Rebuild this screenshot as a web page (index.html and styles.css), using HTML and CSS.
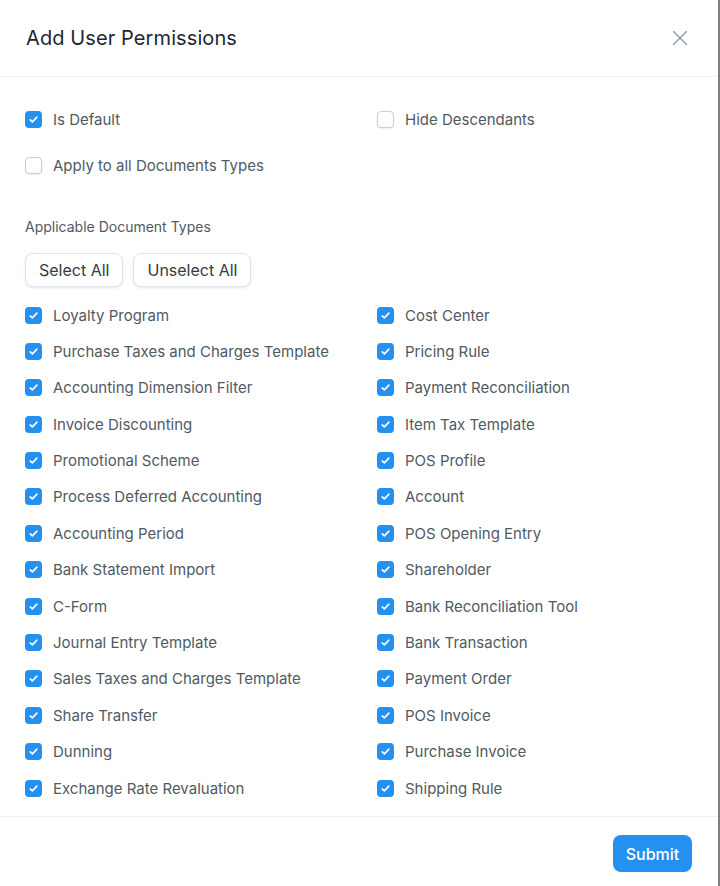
FILE: index.html
```html
<!DOCTYPE html>
<html lang="en">
<head>
    <meta charset="UTF-8">
    <meta name="viewport" content="width=device-width, initial-scale=1.0">
    <title>Add User Permissions</title>
    <link rel="stylesheet" href="styles.css">
</head>
<body>
    <!-- Add User Permissions dialog -->
    <div class="modal">
        <div class="modal-header">
            <h3 class="modal-title">Add User Permissions</h3>
            <button type="button" class="close-btn" aria-label="Close">
                <svg width="16" height="16" viewBox="0 0 16 16" fill="none" stroke="#8d99a6" stroke-width="1.4" stroke-linecap="round">
                    <path d="M1.5 1.5l13 13M14.5 1.5l-13 13"/>
                </svg>
            </button>
        </div>

        <div class="modal-body">
            <div class="top-options">
                <label class="check"><span class="box checked"></span>Is Default</label>
                <label class="check"><span class="box"></span>Hide Descendants</label>
                <label class="check"><span class="box"></span>Apply to all Documents Types</label>
            </div>

            <div class="section-label">Applicable Document Types</div>
            <div class="btn-row">
                <button type="button" class="btn-default">Select All</button>
                <button type="button" class="btn-default">Unselect All</button>
            </div>

            <div class="doc-types" id="docTypes"></div>
        </div>

        <div class="modal-footer">
            <button type="button" class="btn-primary">Submit</button>
        </div>
    </div>

    <div class="overlay-strip"></div>

<script>
    // pairs of doctypes: left column, right column
    const docTypes = [
        ['Loyalty Program', 'Cost Center'],
        ['Purchase Taxes and Charges Template', 'Pricing Rule'],
        ['Accounting Dimension Filter', 'Payment Reconciliation'],
        ['Invoice Discounting', 'Item Tax Template'],
        ['Promotional Scheme', 'POS Profile'],
        ['Process Deferred Accounting', 'Account'],
        ['Accounting Period', 'POS Opening Entry'],
        ['Bank Statement Import', 'Shareholder'],
        ['C-Form', 'Bank Reconciliation Tool'],
        ['Journal Entry Template', 'Bank Transaction'],
        ['Sales Taxes and Charges Template', 'Payment Order'],
        ['Share Transfer', 'POS Invoice'],
        ['Dunning', 'Purchase Invoice'],
        ['Exchange Rate Revaluation', 'Shipping Rule']
    ];

    const list = document.getElementById('docTypes');
    docTypes.forEach(pair => {
        pair.forEach(name => {
            const item = document.createElement('label');
            item.className = 'check';
            item.innerHTML = '<span class="box checked"></span>' + name;
            list.appendChild(item);
        });
    });
</script>
</body>
</html>
```

FILE: styles.css
```css
/* Dialog styles */
body {
    margin: 0;
    padding: 0;
    font-family: 'Inter', 'Noto Sans', sans-serif;
    background: #7f7f7f;
    display: flex;
    height: 886px;
    overflow: hidden;
}

.modal {
    width: 718px;
    background: #ffffff;
    display: flex;
    flex-direction: column;
}

.overlay-strip {
    flex: 1;
    background: #808080;
}

.modal-header {
    height: 77px;
    box-sizing: border-box;
    border-bottom: 1px solid #eef0f2;
    display: flex;
    align-items: center;
    justify-content: space-between;
    padding: 0 30px 0 26px;
}

.modal-title {
    margin: 0;
    font-size: 20px;
    font-weight: 400;
    color: #1f272e;
    letter-spacing: 0.1px;
}

.close-btn {
    background: none;
    border: none;
    padding: 0;
    width: 16px;
    height: 16px;
    cursor: pointer;
}

.modal-body {
    padding: 32px 25px 0 25px;
    height: 740px;
    box-sizing: border-box;
    border-bottom: 1px solid #eef0f2;
}

.check {
    display: flex;
    align-items: center;
    height: 20px;
    font-size: 15px;
    color: #505a62;
    cursor: pointer;
}

.box {
    width: 17px;
    height: 17px;
    box-sizing: border-box;
    border: 1px solid #c8ced4;
    border-radius: 4px;
    margin-right: 11px;
    box-shadow: 0 1px 2px rgba(0, 0, 0, 0.08);
    background: #fff;
    flex-shrink: 0;
}

.box.checked {
    border: none;
    background: #2490ef url("data:image/svg+xml,%3Csvg xmlns='http://www.w3.org/2000/svg' width='17' height='17' viewBox='0 0 17 17'%3E%3Cpath d='M5.2 8.8l2.2 2.1 4.5-4.8' fill='none' stroke='white' stroke-width='1.6' stroke-linecap='round' stroke-linejoin='round'/%3E%3C/svg%3E") center no-repeat;
    box-shadow: none;
}

.top-options {
    display: grid;
    grid-template-columns: 352px 1fr;
    row-gap: 26px;
}

.section-label {
    margin-top: 43px;
    font-size: 14px;
    color: #505a62;
}

.btn-row {
    display: flex;
    gap: 10px;
    margin-top: 18px;
}

.btn-default {
    font-family: inherit;
    font-size: 16px;
    color: #333c44;
    background: #fff;
    border: 1px solid #e2e6e9;
    border-radius: 8px;
    padding: 0 13px;
    height: 34px;
    box-shadow: 0 1px 3px rgba(0, 0, 0, 0.1);
}

.doc-types {
    display: grid;
    grid-template-columns: 352px 1fr;
    grid-auto-rows: 20px;
    row-gap: 16.4px;
    margin-top: 18px;
}

.modal-footer {
    flex: 1;
    display: flex;
    justify-content: flex-end;
    align-items: flex-start;
    padding: 18px 26px 0 0;
}

.btn-primary {
    font-family: inherit;
    font-size: 16px;
    font-weight: 500;
    color: #fff;
    background: #2490ef;
    border: none;
    border-radius: 8px;
    height: 37px;
    width: 79px;
    cursor: pointer;
}
```
